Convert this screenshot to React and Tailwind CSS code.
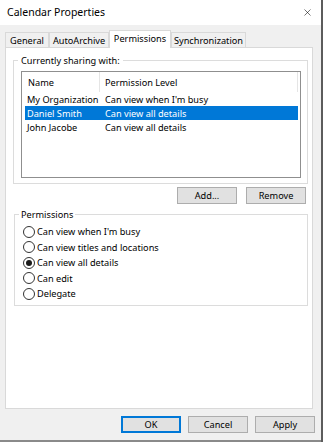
import { X } from 'lucide-react'

const people = [
  { name: 'My Organization', level: "Can view when I'm busy" },
  { name: 'Daniel Smith', level: 'Can view all details', selected: true },
  { name: 'John Jacobe', level: 'Can view all details' },
]

const options = [
  "Can view when I'm busy",
  'Can view titles and locations',
  'Can view all details',
  'Can edit',
  'Delegate',
]

function Tab({ label, width, active }) {
  if (active) {
    return (
      <div className={`${width} h-[18px] -mb-px relative z-10 bg-white border border-b-0 border-[#d9d9d9] flex items-center justify-center pb-[2px]`}>
        {label}
      </div>
    )
  }
  return (
    <div className={`${width} h-[15px] bg-[#f0f0f0] border border-b-0 border-[#d9d9d9] flex items-center justify-center`}>
      {label}
    </div>
  )
}

function Button({ children, primary }) {
  return (
    <button
      className={`w-[60px] h-[17px] bg-[#e1e1e1] flex items-center justify-center leading-none ${
        primary ? 'border-2 border-[#0078d7]' : 'border border-[#adadad]'
      }`}
    >
      {children}
    </button>
  )
}

function Radio({ label, checked }) {
  return (
    <div className="h-[15.5px] flex items-center gap-[2px]">
      <span className="w-[12px] h-[12px] rounded-full border border-[#333] bg-white flex items-center justify-center shrink-0">
        {checked && <span className="w-[6px] h-[6px] rounded-full bg-[#1a1a1a]" />}
      </span>
      <span>{label}</span>
    </div>
  )
}

export default function App() {
  return (
    <div className="w-[323px] h-[442px] overflow-hidden flex flex-col bg-[#f0f0f0] text-[9.2px] leading-[13px] text-black font-['Noto_Sans',sans-serif] border-r-2 border-[#5c5c5c]">
      {/* Title bar */}
      <div className="h-[25px] bg-white flex items-center justify-between pl-[7px] pr-[8px] shrink-0">
        <span className="text-[10.5px]">Calendar Properties</span>
        <X size={11} strokeWidth={1.2} className="text-black" />
      </div>

      {/* Tabs */}
      <div className="flex items-end pl-[5px] pt-[5px]">
        <Tab label="General" width="w-[44px]" />
        <Tab label="AutoArchive" width="w-[60px]" />
        <Tab label="Permissions" width="w-[62px]" active />
        <Tab label="Synchronization" width="w-[75px]" />
      </div>

      {/* Tab panel */}
      <div className="ml-[5px] w-[308px] h-[362px] bg-white border border-[#d9d9d9] flex flex-col">
        <fieldset className="mt-[6px] ml-[7px] w-[295px] h-[130px] border border-[#dcdcdc]">
          <legend className="ml-[4px] px-[3px]">Currently sharing with:</legend>
          <div className="mt-[4px] ml-[7px] w-[280px] h-[107px] border border-[#8f8f8f] flex flex-col">
            <div className="h-[20px] flex items-center shrink-0">
              <div className="w-[78px] pl-[6px] h-full flex items-center border-r border-[#e5e5e5]">Name</div>
              <div className="w-[198px] pl-[5px] h-full flex items-center border-r border-[#e5e5e5]">Permission Level</div>
            </div>
            {people.map(p => (
              <div
                key={p.name}
                className={`ml-[3px] w-[273px] h-[14px] flex items-center ${
                  p.selected ? 'bg-[#0078d7] text-white' : ''
                }`}
              >
                <div className="w-[79px] pl-[2px] whitespace-nowrap">{p.name}</div>
                <div className="pl-[1px] whitespace-nowrap">{p.level}</div>
              </div>
            ))}
          </div>
        </fieldset>

        <div className="mt-[3px] flex justify-end gap-[9px] pr-[6px]">
          <Button>Add...</Button>
          <Button>Remove</Button>
        </div>

        <fieldset className="mt-[4px] ml-[8px] w-[294px] h-[98px] border border-[#dcdcdc]">
          <legend className="ml-[4px] px-[2px]">Permissions</legend>
          <div className="pt-[3px] pl-[8px] flex flex-col">
            {options.map(o => (
              <Radio key={o} label={o} checked={o === 'Can view all details'} />
            ))}
          </div>
        </fieldset>
      </div>

      {/* Dialog buttons */}
      <div className="mt-[7px] flex justify-end gap-[7px] pr-[6px]">
        <Button primary>OK</Button>
        <Button>Cancel</Button>
        <Button>Apply</Button>
      </div>

      <div className="mt-auto h-[2px] bg-[#8a8a8a]" />
    </div>
  )
}
